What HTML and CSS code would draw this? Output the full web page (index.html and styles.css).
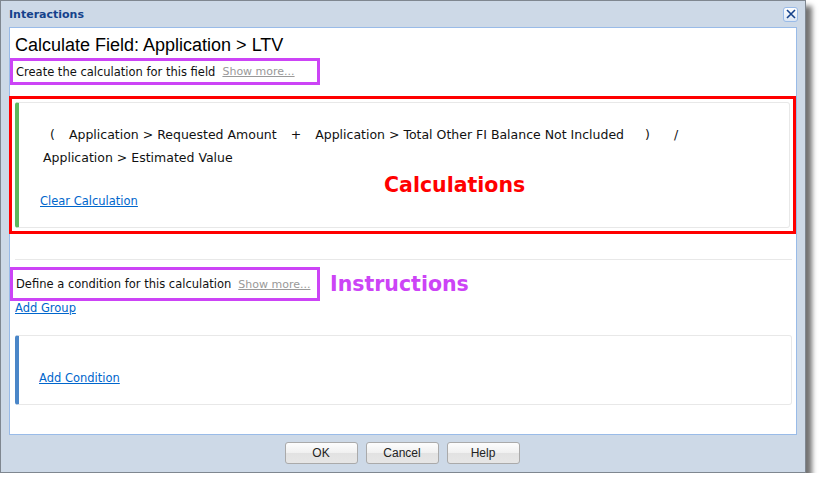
FILE: index.html
```html
<!DOCTYPE html>
<html lang="en">
<head>
<meta charset="UTF-8" />
<title>Interactions</title>
<link rel="stylesheet" href="styles.css">
</head>
<body>
  <div class="dialog">
    <div class="titlebar">
      <span class="title">Interactions</span>
      <button class="close" aria-label="Close">
        <svg width="10" height="10" viewBox="0 0 10 10"><path d="M1 1 L9 9 M9 1 L1 9" stroke="#15428b" stroke-width="1.6" fill="none"/></svg>
      </button>
    </div>

    <div class="content">
      <h1>Calculate Field: Application &gt; LTV</h1>

      <div class="note note-top">
        Create the calculation for this field
        <a class="more" href="#">Show more...</a>
      </div>

      <div class="mark-red">
        <div class="card card-green">
          <div class="formula">
            <span class="tok tok-open">(</span>
            <span class="tok">Application &gt; Requested Amount</span>
            <span class="tok">+</span>
            <span class="tok">Application &gt; Total Other FI Balance Not Included</span>
            <span class="tok tok-close">)</span>
            <span class="tok tok-div">/</span>
            <span class="tok">Application &gt; Estimated Value</span>
          </div>
          <a class="link clear" href="#">Clear Calculation</a>
        </div>
        <span class="label label-red">Calculations</span>
      </div>

      <hr class="sep">

      <div class="row">
        <div class="note note-cond">
          Define a condition for this calculation
          <a class="more" href="#">Show more...</a>
        </div>
        <span class="label label-purple">Instructions</span>
      </div>
      <a class="link group" href="#">Add Group</a>

      <div class="card card-blue">
        <a class="link" href="#">Add Condition</a>
      </div>
    </div>

    <div class="footer">
      <button class="btn">OK</button>
      <button class="btn">Cancel</button>
      <button class="btn">Help</button>
    </div>
  </div>
</body>
</html>
```

FILE: styles.css
```css
* {
  box-sizing: border-box;
}
body {
  margin: 0;
  background: #fff;
  font-family: "DejaVu Sans", Verdana, sans-serif;
  color: #111;
}
.dialog {
  width: 806px;
  height: 473px;
  border: 1px solid #7f8790;
  background: #cdd9e7;
  box-shadow: 6px 6px 5px rgba(0,0,0,0.55);
  display: flex;
  flex-direction: column;
}
.titlebar {
  height: 26px;
  flex: none;
  display: flex;
  align-items: center;
  justify-content: space-between;
  padding: 0 7px 0 8px;
}
.title {
  font-size: 11px;
  font-weight: bold;
  color: #15428b;
}
.close {
  width: 15px;
  height: 15px;
  padding: 0;
  border: 1px solid #99bbe8;
  border-radius: 3px;
  background: linear-gradient(#ffffff, #dbe6f4);
  display: flex;
  align-items: center;
  justify-content: center;
}
.content {
  flex: none;
  margin: 0 8px;
  height: 408px;
  background: #fff;
  border: 1px solid #99bbe8;
}
h1 {
  margin: 4px 0 0 5px;
  font-family: "Liberation Sans", Arial, sans-serif;
  font-weight: normal;
  font-size: 18px;
  line-height: 26px;
  color: #000;
}
.note {
  border: 3px solid #cc44f6;
  font-size: 11.5px;
  padding: 0 0 0 3px;
  display: flex;
  align-items: center;
  gap: 7px;
  white-space: nowrap;
}
.note-top {
  width: 310px;
  height: 27px;
}
.more {
  color: #999;
  font-size: 11px;
}
.mark-red {
  position: relative;
  margin: 11px 0 0 -1px;
  border: 3px solid #ff0000;
  padding: 3px;
  width: 787px;
}
.card {
  border: 1px solid #e8e8e8;
  border-left: 4px solid #5cb85c;
  border-radius: 3px;
  background: #fff;
}
.card-green {
  height: 126px;
  padding: 20px 10px 0 24px;
}
.formula {
  display: flex;
  flex-wrap: wrap;
  column-gap: 14px;
  font-size: 12.5px;
  line-height: 23px;
}
.tok {
  white-space: nowrap;
}
.tok-open {
  margin-left: 7px;
}
.tok-close {
  margin-left: 7px;
}
.tok-div {
  margin-left: 10px;
}
.link {
  color: #0066cc;
  font-size: 11.5px;
}
.clear {
  display: inline-block;
  margin: 25px 0 0 -3px;
}
.label {
  font-size: 20.5px;
  font-weight: bold;
  white-space: nowrap;
}
.label-red {
  position: absolute;
  left: 372px;
  top: 74px;
  color: #ff0000;
}
.label-purple {
  color: #cc44f6;
  margin-left: 10px;
}
.sep {
  border: 0;
  border-top: 1px solid #e8e8e8;
  margin: 25px 4px 0 5px;
}
.row {
  display: flex;
  align-items: center;
  margin-top: 7px;
}
.note-cond {
  width: 310px;
  height: 34px;
}
.group {
  display: block;
  width: max-content;
  margin: 0 0 0 5px;
  line-height: 14px;
}
.card-blue {
  border-left-color: #4a86c8;
  margin: 20px 4px 0 5px;
  height: 70px;
  padding: 0 0 19px 20px;
  display: flex;
  align-items: flex-end;
}
.footer {
  flex: 1;
  display: flex;
  justify-content: center;
  align-items: center;
  gap: 8px;
  padding: 0 2px 2px 0;
}
.btn {
  width: 73px;
  height: 22px;
  font-family: "Liberation Sans", Arial, sans-serif;
  font-size: 12px;
  color: #222;
  border: 1px solid #aaa;
  border-radius: 3px;
  background: linear-gradient(#fdfdfd 0%, #f0f0f0 50%, #e2e2e2 51%, #e6e6e6 100%);
  padding: 0;
}
```
